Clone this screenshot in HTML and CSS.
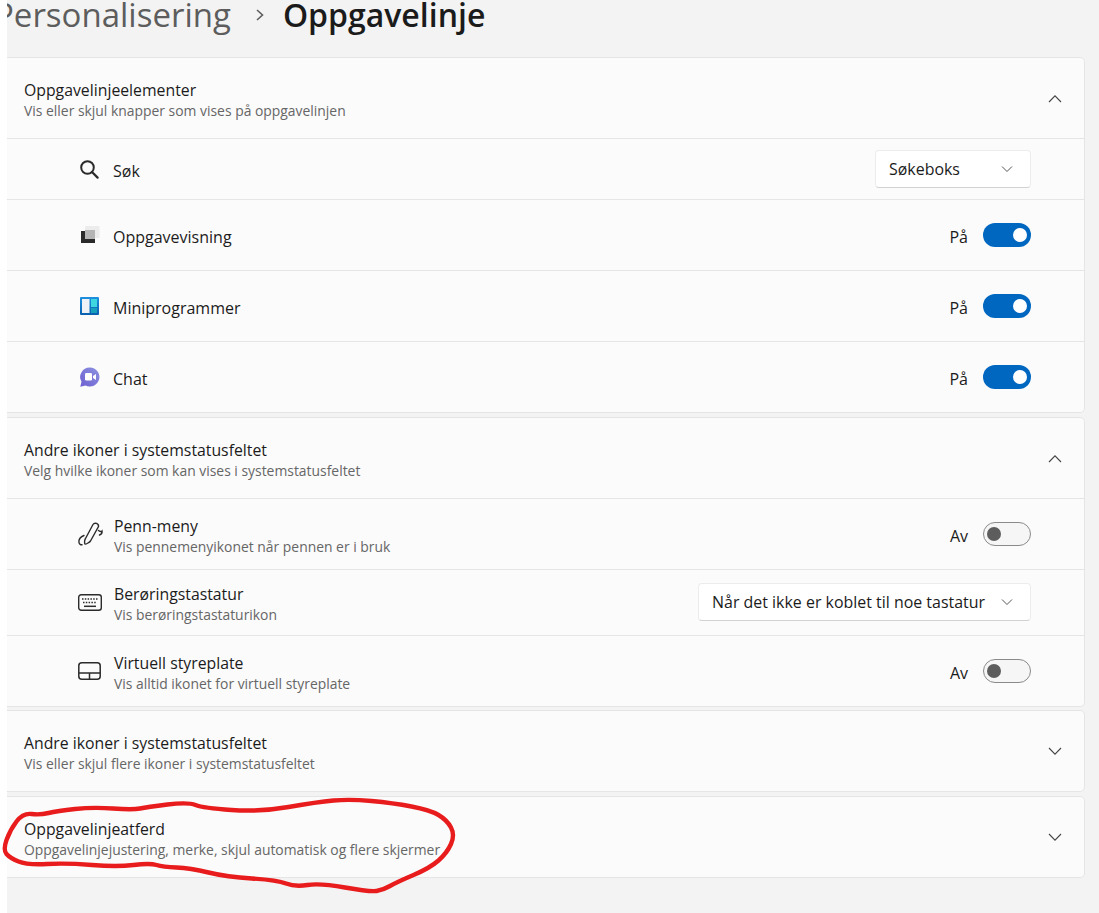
FILE: index.html
```html
<!DOCTYPE html>
<html lang="no">
<head>
<meta charset="utf-8">
<title>Oppgavelinje</title>
<link rel="stylesheet" href="styles.css">
</head>
<body>
<main class="page">
  <h1 class="crumbs"><span class="crumb-parent">Personalisering</span>
    <svg class="crumb-sep" width="12" height="14" viewBox="0 0 12 14"><path d="M3 2l5.500 5L3 12" fill="none" stroke="#5d5d5d" stroke-width="1.600"/></svg>
    <span class="crumb-current">Oppgavelinje</span></h1>

  <section class="card first">
    <header class="head">
      <div class="texts"><div class="title">Oppgavelinjeelementer</div><div class="sub">Vis eller skjul knapper som vises på oppgavelinjen</div></div>
      <svg class="chev" width="14" height="9" viewBox="0 0 14 9"><path d="M1 8l6-6.200 6 6.200" fill="none" stroke="#444" stroke-width="1.100"/></svg>
    </header>
    <div class="row row-a h-search">
      <div class="ic"><svg width="19" height="19" viewBox="0 0 19 19"><circle cx="7.500" cy="7.500" r="6.300" fill="none" stroke="#2b2b2b" stroke-width="2"/><path d="M12 12l5.600 5.600" stroke="#2b2b2b" stroke-width="2.200" stroke-linecap="round"/></svg></div>
      <div class="label">Søk</div>
      <div class="select">Søkeboks<svg class="sel-chev" width="12" height="8" viewBox="0 0 12 8"><path d="M1 1.500l5 5 5-5" fill="none" stroke="#555" stroke-width="1"/></svg></div>
    </div>
    <div class="row row-a h-tall">
      <div class="ic"><svg width="20" height="18" viewBox="0 0 20 18"><rect x="5" y="0" width="14.500" height="12" rx="1" fill="#ececec"/><rect x="5" y="4" width="10" height="9" fill="#b5b5b5"/><path d="M1 5h4v8h10v4H1z" fill="#2a2a2a"/></svg></div>
      <div class="label">Oppgavevisning</div>
      <div class="state">På</div><div class="toggle on"></div>
    </div>
    <div class="row row-a h-tall">
      <div class="ic"><svg width="19" height="18" viewBox="0 0 19 18"><defs><linearGradient id="mini" x1="0" y1="0" x2="0" y2="1"><stop offset="0" stop-color="#1e90e0"/><stop offset="1" stop-color="#0a5fae"/></linearGradient></defs><rect width="19" height="18" rx="1" fill="url(#mini)"/><rect x="2" y="2" width="7.500" height="14" fill="#eef1f6"/><rect x="11" y="2" width="6" height="8" fill="#3ed6df"/><rect x="11" y="11" width="6" height="5" fill="#16a0bc"/></svg></div>
      <div class="label">Miniprogrammer</div>
      <div class="state">På</div><div class="toggle on"></div>
    </div>
    <div class="row row-a h-tall">
      <div class="ic"><svg width="20" height="20" viewBox="0 0 20 20"><defs><linearGradient id="chatg" x1="0" y1="1" x2="1" y2="0"><stop offset="0" stop-color="#6e5fd0"/><stop offset="1" stop-color="#8b93e0"/></linearGradient></defs><path d="M10 .500a9.500 9.500 0 1 1-4.500 17.900L.3 19.800l1.200-5A9.500 9.500 0 0 1 10 .500z" fill="url(#chatg)"/><rect x="5" y="6" width="7" height="7.500" rx="1.200" fill="#fff"/><path d="M13 9l3-2v6l-3-2z" fill="#fff"/></svg></div>
      <div class="label">Chat</div>
      <div class="state">På</div><div class="toggle on"></div>
    </div>
  </section>

  <section class="card second">
    <header class="head">
      <div class="texts"><div class="title">Andre ikoner i systemstatusfeltet</div><div class="sub">Velg hvilke ikoner som kan vises i systemstatusfeltet</div></div>
      <svg class="chev" width="14" height="9" viewBox="0 0 14 9"><path d="M1 8l6-6.200 6 6.200" fill="none" stroke="#444" stroke-width="1.100"/></svg>
    </header>
    <div class="row row-b h-pen">
      <div class="ic"><svg width="25" height="26" viewBox="0 0 25 26" fill="none" stroke="#2b2b2b" stroke-width="1.400" stroke-linecap="round"><path d="M7.500 17.500L15 3.500c1.500-2.500 6-1 5.500 2L12.500 20c-1 1.500-5 3.500-5.500 3s-.8-3.500.5-5.500z"/><path d="M6 14.500C2.500 16 .5 18.500 1 21.500c.3 1.800 1.800 2.500 3 2.200"/><path d="M20.500 9.500c1.300 1 3 1.300 3.500.6.300 1.700-1 3.400-2.500 3.900"/></svg></div>
      <div class="texts"><div class="title">Penn-meny</div><div class="sub">Vis pennemenyikonet når pennen er i bruk</div></div>
      <div class="state">Av</div><div class="toggle off"></div>
    </div>
    <div class="row row-b h-kbd">
      <div class="ic"><svg width="24" height="17" viewBox="0 0 24 17" fill="none"><rect x=".7" y=".7" width="22.600" height="15.600" rx="2.500" stroke="#2b2b2b" stroke-width="1.400"/><path d="M4 5h16M5 8.500h14" stroke="#2b2b2b" stroke-width="1.500" stroke-dasharray="1.500 1.300"/><path d="M6 12.300h12" stroke="#2b2b2b" stroke-width="1.500"/></svg></div>
      <div class="texts"><div class="title">Berøringstastatur</div><div class="sub">Vis berøringstastaturikon</div></div>
      <div class="select">Når det ikke er koblet til noe tastatur<svg class="sel-chev" width="12" height="8" viewBox="0 0 12 8"><path d="M1 1.500l5 5 5-5" fill="none" stroke="#555" stroke-width="1"/></svg></div>
    </div>
    <div class="row row-b h-pad">
      <div class="ic"><svg width="23" height="18" viewBox="0 0 23 18" fill="none" stroke="#2b2b2b" stroke-width="1.500"><rect x=".8" y=".8" width="21.400" height="16.400" rx="3"/><path d="M1 11h21M11.500 11v6"/></svg></div>
      <div class="texts"><div class="title">Virtuell styreplate</div><div class="sub">Vis alltid ikonet for virtuell styreplate</div></div>
      <div class="state">Av</div><div class="toggle off"></div>
    </div>
  </section>

  <section class="card third">
    <header class="head">
      <div class="texts"><div class="title">Andre ikoner i systemstatusfeltet</div><div class="sub">Vis eller skjul flere ikoner i systemstatusfeltet</div></div>
      <svg class="chev" width="14" height="9" viewBox="0 0 14 9"><path d="M1 1l6 6.200 6-6.200" fill="none" stroke="#444" stroke-width="1.100"/></svg>
    </header>
  </section>

  <section class="card fourth">
    <header class="head">
      <div class="texts"><div class="title">Oppgavelinjeatferd</div><div class="sub">Oppgavelinjejustering, merke, skjul automatisk og flere skjermer</div></div>
      <svg class="chev" width="14" height="9" viewBox="0 0 14 9"><path d="M1 1l6 6.200 6-6.200" fill="none" stroke="#444" stroke-width="1.100"/></svg>
    </header>
  </section>
</main>
<svg class="scribble" width="470" height="110" viewBox="0 790 470 110"><path d="M16.500 821.500Q10 830 6.500 840Q3 850 6.500 854Q10 858 18.500 861.500Q27 865 47 864Q67 863 92 865Q117 867 133.500 865Q150 863 156.500 865Q163 867 176.500 867.500Q190 868 208.500 872.500Q227 877 252 878.500Q277 880 286 883.500Q295 887 307.500 885Q320 883 345 887.500Q370 892 376.500 891Q383 890 390 886Q397 882 413.500 875Q430 868 438.500 860.500Q447 853 451 844Q455 835 451 827.500Q447 820 438.500 815Q430 810 411.500 806.500Q393 803 371.500 801Q350 799 333.500 800.500Q317 802 288.500 807Q260 812 231.500 810Q203 808 195.500 805Q188 802 167.500 804.500Q147 807 140 808.500Q133 810 113 808.500Q93 807 75 809Q57 811 48.500 813Q40 815 31.500 814Q23 813 16.500 821.500Z" fill="none" stroke="#e81c1c" stroke-width="4.400" stroke-linejoin="round"/></svg>
</body>
</html>
```

FILE: styles.css
```css
* { box-sizing: border-box; }
html, body { margin: 0; padding: 0; height: 100%; background: #fff; }
body { position: relative; font-family: "Open Sans", "Noto Sans", "Liberation Sans", sans-serif; color: #1b1b1b; overflow: hidden; }
.page { margin-left: 7px; height: 913px; background: #f3f3f3; padding-right: 14px; overflow: hidden; }
.crumbs { margin: 0; height: 57px; display: flex; align-items: flex-start; font-size: 33px; font-weight: 500; line-height: 30px; white-space: nowrap; }
.crumb-parent { color: #5d5d5d; margin-left: -13px; }
.crumb-sep { margin: 8px 17px 0 23px; flex: none; }
.crumb-current { color: #1b1b1b; font-size: 32px; font-weight: 600; }
.card { background: #fbfbfb; border: 1px solid #e5e5e5; border-left: 0; border-radius: 0 5px 5px 0; }
.second { margin-top: 4px; }
.third { margin-top: 3px; }
.fourth { margin-top: 4px; }
.head { height: 80px; display: flex; align-items: center; justify-content: space-between; padding: 0 22px 0 17px; }
.texts { display: flex; flex-direction: column; padding-top: 4px; }
.h-kbd .texts { padding-top: 2px; }
.title { font-size: 15.800px; line-height: 22px; color: #1b1b1b; }
.sub { font-size: 13.900px; line-height: 20px; color: #666; }
.row { display: flex; align-items: center; border-top: 1px solid #e5e5e5; padding-right: 53px; }
.row-a { padding-left: 66px; }
.row-b { padding-left: 64px; }
.row-a .ic { width: 40px; padding-left: 7px; }
.row-b .ic { width: 43px; padding-left: 7px; }
.ic { flex: none; display: flex; align-items: center; }
.h-search { height: 61px; }
.h-tall { height: 71px; }
.h-pen { height: 71px; }
.h-kbd { height: 66px; }
.h-pad { height: 71px; }
.label { font-size: 16px; margin-top: 4px; }
.state { margin-left: auto; margin-right: 15px; margin-top: 4px; font-size: 16px; }
.select { margin-left: auto; height: 38px; padding: 0 17px 0 13px; display: flex; align-items: center; gap: 16px; background: #fff; border: 1px solid #ececec; border-bottom-color: #d2d2d2; border-radius: 4px; font-size: 15.950px; }
.h-kbd .select { margin-bottom: 1px; }
.h-search .select { width: 156px; justify-content: space-between; }
.toggle { width: 48px; height: 24px; border-radius: 12px; position: relative; flex: none; }
.toggle::after { content: ""; position: absolute; top: 5px; width: 14px; height: 14px; border-radius: 50%; }
.toggle.on { background: #0067c0; }
.toggle.on::after { right: 4px; background: #fff; }
.toggle.off { background: #f6f6f6; border: 1px solid #8a8a8a; }
.toggle.off::after { left: 3px; top: 4px; background: #5d5d5d; }
.scribble { position: absolute; left: 0; top: 790px; pointer-events: none; }
```
